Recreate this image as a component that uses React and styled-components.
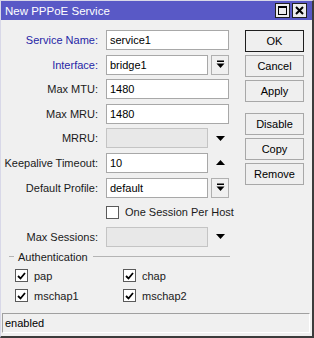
import React from 'react'
import styled, { createGlobalStyle } from 'styled-components'

const GlobalStyle = createGlobalStyle`
  html, body {
    margin: 0;
    padding: 0;
    background: #ffffff;
  }
  body {
    font-family: "Liberation Sans", Arial, sans-serif;
    font-size: 11px;
    color: #1a1a1a;
  }
`

const Window = styled.div`
  width: 311px;
  height: 335px;
  display: flex;
  flex-direction: column;
  background: #f0f0f0;
  border-left: 1px solid #d8d8e8;
  border-top: 1px solid #d8d8e8;
  border-right: 2px solid #3c3c3c;
  border-bottom: 2px solid #3c3c3c;
`

const TitleBar = styled.div`
  height: 19px;
  display: flex;
  align-items: center;
  justify-content: space-between;
  padding: 0 5px 0 4px;
  background: #5959c6;
  color: #ffffff;
  font-size: 11.5px;
`

const TitleButtons = styled.div`
  display: flex;
  gap: 2px;
`

const TitleButton = styled.div`
  width: 13px;
  height: 13px;
  border: 1px solid #202020;
  background: #ececec;
  display: flex;
  align-items: center;
  justify-content: center;
`

const Body = styled.div`
  display: flex;
  gap: 16px;
  padding-top: 10px;
`

const Form = styled.div`
  width: 228px;
  display: grid;
  grid-template-columns: 97px 123px;
  column-gap: 8px;
  row-gap: 4.6px;
  grid-auto-rows: 20px;
`

const Label = styled.div`
  display: flex;
  align-items: center;
  justify-content: flex-end;
  color: ${p => (p.$accent ? '#2626a6' : '#1a1a1a')};
  white-space: nowrap;
`

const Field = styled.div`
  display: flex;
  align-items: stretch;
  gap: 3px;
`

const Input = styled.div`
  flex: 1;
  box-sizing: border-box;
  height: 20px;
  display: flex;
  align-items: center;
  padding: 0 3px;
  background: ${p => (p.$disabled ? '#e8e8e8' : '#ffffff')};
  border: 1px solid ${p => (p.$disabled ? '#c4c4c4' : '#a8a8a8')};
  color: #000;
`

const DropButton = styled.div`
  width: 18px;
  box-sizing: border-box;
  border: 1px solid #b0b0b0;
  background: #f0f0f0;
  display: flex;
  align-items: center;
  justify-content: center;
`

const ArrowSlot = styled.div`
  width: 18px;
  display: flex;
  align-items: center;
  justify-content: center;
`

const CheckRow = styled.label`
  display: flex;
  align-items: center;
  gap: 6px;
  white-space: nowrap;
`

const Box = styled.span`
  width: 13px;
  height: 13px;
  box-sizing: border-box;
  border: 1px solid #5a5a5a;
  background: #ffffff;
  display: flex;
  align-items: center;
  justify-content: center;
  flex-shrink: 0;
`

const Buttons = styled.div`
  width: 59px;
  display: flex;
  flex-direction: column;
  gap: 3px;
`

const Button = styled.div`
  height: 22px;
  box-sizing: border-box;
  display: flex;
  align-items: center;
  justify-content: center;
  border: 1px solid ${p => (p.$default ? '#1e1e1e' : '#a8a8a8')};
  background: #efefef;
  color: #000;
  margin-top: ${p => (p.$spaced ? '8px' : '0')};
`

const AuthHeader = styled.div`
  display: flex;
  align-items: center;
  gap: 4px;
  height: 14px;
  margin-top: 3px;
  padding-left: 8px;
  width: 221px;
  &::before {
    content: '';
    width: 5px;
    border-top: 1px solid #b4b4b4;
  }
  &::after {
    content: '';
    flex: 1;
    margin-left: 1px;
    border-top: 1px solid #b4b4b4;
  }
`

const AuthGrid = styled.div`
  display: grid;
  grid-template-columns: 108px 108px;
  grid-auto-rows: 16px;
  row-gap: 4px;
  padding-left: 14px;
  margin-top: 4px;
`

const StatusBar = styled.div`
  margin: auto 2px 3px 1px;
  height: 20px;
  box-sizing: border-box;
  display: flex;
  align-items: center;
  padding-left: 2px;
  border-top: 1px solid #a0a0a0;
  border-left: 1px solid #a0a0a0;
  border-right: 1px solid #ffffff;
  border-bottom: 1px solid #ffffff;
  color: #000;
`

const DropIcon = () => (
  <svg width="9" height="9" viewBox="0 0 9 9">
    <rect x="1" y="0.5" width="7" height="1.5" fill="#000" />
    <path d="M0.5 3.5 H8.5 L4.5 8 Z" fill="#000" />
  </svg>
)

const Triangle = ({ up }) => (
  <svg width="9" height="5" viewBox="0 0 9 5">
    <path d={up ? 'M0 5 H9 L4.5 0 Z' : 'M0 0 H9 L4.5 5 Z'} fill="#000" />
  </svg>
)

const Tick = () => (
  <svg width="9" height="8" viewBox="0 0 9 8">
    <path d="M1 4 L3.5 6.5 L8 1" stroke="#000" strokeWidth="1.8" fill="none" />
  </svg>
)

const Check = ({ checked, children }) => (
  <CheckRow>
    <Box>{checked && <Tick />}</Box>
    {children}
  </CheckRow>
)

export default function App() {
  return (
    <>
      <GlobalStyle />
      <Window>
        <TitleBar>
          <span>New PPPoE Service</span>
          <TitleButtons>
            <TitleButton>
              <svg width="9" height="9" viewBox="0 0 9 9">
                <rect x="0.5" y="0.5" width="8" height="8" fill="none" stroke="#000" />
                <rect x="0" y="0" width="9" height="2" fill="#000" />
              </svg>
            </TitleButton>
            <TitleButton>
              <svg width="9" height="9" viewBox="0 0 9 9">
                <path d="M1 1 L8 8 M8 1 L1 8" stroke="#000" strokeWidth="2" />
              </svg>
            </TitleButton>
          </TitleButtons>
        </TitleBar>

        <Body>
          <Form>
            <Label $accent>Service Name:</Label>
            <Field>
              <Input>service1</Input>
            </Field>

            <Label $accent>Interface:</Label>
            <Field>
              <Input>bridge1</Input>
              <DropButton><DropIcon /></DropButton>
            </Field>

            <Label>Max MTU:</Label>
            <Field>
              <Input>1480</Input>
            </Field>

            <Label>Max MRU:</Label>
            <Field>
              <Input>1480</Input>
            </Field>

            <Label>MRRU:</Label>
            <Field>
              <Input $disabled />
              <ArrowSlot><Triangle /></ArrowSlot>
            </Field>

            <Label>Keepalive Timeout:</Label>
            <Field>
              <Input>10</Input>
              <ArrowSlot><Triangle up /></ArrowSlot>
            </Field>

            <Label>Default Profile:</Label>
            <Field>
              <Input>default</Input>
              <DropButton><DropIcon /></DropButton>
            </Field>

            <Label />
            <Check>One Session Per Host</Check>

            <Label>Max Sessions:</Label>
            <Field>
              <Input $disabled />
              <ArrowSlot><Triangle /></ArrowSlot>
            </Field>
          </Form>

          <Buttons>
            <Button $default>OK</Button>
            <Button>Cancel</Button>
            <Button>Apply</Button>
            <Button $spaced>Disable</Button>
            <Button>Copy</Button>
            <Button>Remove</Button>
          </Buttons>
        </Body>

        <AuthHeader>Authentication</AuthHeader>
        <AuthGrid>
          <Check checked>pap</Check>
          <Check checked>chap</Check>
          <Check checked>mschap1</Check>
          <Check checked>mschap2</Check>
        </AuthGrid>

        <StatusBar>enabled</StatusBar>
      </Window>
    </>
  )
}
